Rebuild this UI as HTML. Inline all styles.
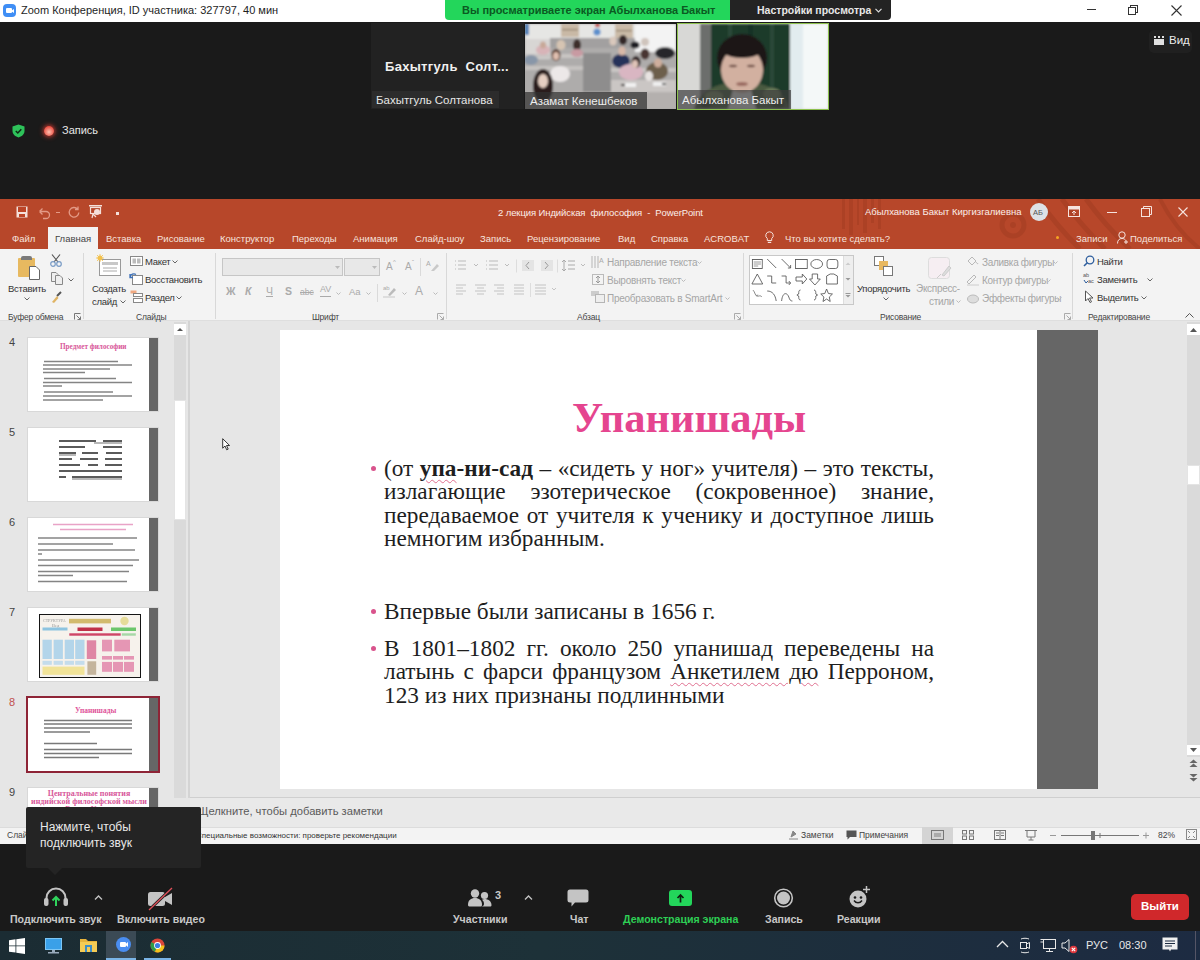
<!DOCTYPE html>
<html><head><meta charset="utf-8">
<style>
*{margin:0;padding:0;box-sizing:border-box}
html,body{width:1200px;height:960px;overflow:hidden;background:#1a1a1a;font-family:"Liberation Sans",sans-serif}
.a{position:absolute}
.t{position:absolute;white-space:nowrap;line-height:1}
svg{position:absolute;overflow:visible}
#ztitle{left:0;top:0;width:1200px;height:22px;background:#fff}
#ppt{left:0;top:199px;width:1200px;height:645px;background:#e6e6e6;overflow:hidden}
#zbar{left:0;top:844px;width:1200px;height:87px;background:#1a1a1a}
#task{left:0;top:931px;width:1200px;height:29px;background:linear-gradient(90deg,#1b2c33,#1d3138 45%,#1d2b42)}
.tab{position:absolute;top:35px;font-size:10px;color:#f6e3de;white-space:nowrap;line-height:1}
.rl{position:absolute;font-size:10px;color:#262626;white-space:nowrap;line-height:1}
.rd{position:absolute;font-size:10px;color:#a6a6a6;white-space:nowrap;line-height:1}
.gl{position:absolute;font-size:9px;color:#444;white-space:nowrap;line-height:1}
.sep{position:absolute;top:58px;width:1px;height:66px;background:#d4d4d4}
.zl{position:absolute;font-size:11px;color:#d0d0d0;white-space:nowrap;line-height:1;top:914px}
</style></head><body>
<!-- ZOOM TITLE BAR -->
<div id="ztitle" class="a">
  <div class="a" style="left:3px;top:4px;width:13px;height:13px;border-radius:4px;background:#3f8ef5"></div>
  <div class="a" style="left:5.5px;top:8px;width:6px;height:5px;border-radius:1px;background:#fff"></div>
  <div class="a" style="left:11px;top:8.5px;width:0;height:0;border-top:2px solid transparent;border-bottom:2px solid transparent;border-right:3px solid #fff"></div>
  <div class="t" style="left:21px;top:5px;font-size:11px;color:#1e1e1e">Zoom Конференция, ID участника: 327797, 40 мин</div>
  <!-- window controls -->
  <div class="a" style="left:1087px;top:9px;width:9px;height:1px;background:#333"></div>
  <div class="a" style="left:1130px;top:5px;width:8px;height:8px;border:1px solid #333"></div>
  <div class="a" style="left:1128px;top:7px;width:8px;height:8px;border:1px solid #333;background:#fff"></div>
  <svg style="left:1171px;top:4.5px" width="11" height="11"><path d="M0.5 0.5L10.5 10.5M10.5 0.5L0.5 10.5" stroke="#333" stroke-width="1.1"/></svg>
</div>
<!-- green banner -->
<div class="a" style="left:445px;top:0;width:290px;height:20px;background:#23d65b;border-radius:0 0 0 4px"></div>
<div class="t" style="left:462px;top:5px;font-size:11px;font-weight:bold;color:#0b5a22">Вы просматриваете экран Абылханова Бакыт</div>
<div class="a" style="left:730px;top:0;width:161px;height:20px;background:#232323;border-radius:0 0 4px 0"></div>
<div class="t" style="left:757px;top:5px;font-size:10.5px;font-weight:bold;color:#e8e8e8">Настройки просмотра</div>
<svg style="left:875px;top:8px" width="7" height="5"><path d="M0.5 0.8L3.5 3.8L6.5 0.8" stroke="#ddd" stroke-width="1.2" fill="none"/></svg>

<!-- VIDEO TILES -->
<div class="a" style="left:371px;top:23px;width:153px;height:86px;background:#222"></div>
<div class="t" style="left:385px;top:60px;font-size:13px;font-weight:bold;color:#f0f0f0;letter-spacing:.3px">Бахытгуль&nbsp; Солт...</div>
<div class="a" style="left:372px;top:91px;width:127px;height:17px;background:#2c2c2c"></div>
<div class="t" style="left:376px;top:95px;font-size:11.5px;color:#e6e6e6">Бахытгуль Солтанова</div>

<div id="tile2" class="a" style="left:525px;top:24px;width:151px;height:85px;overflow:hidden;background:#a9a7a6">
<svg style="left:0;top:0" width="151" height="85">
 <defs><filter id="bl" x="-10%" y="-10%" width="120%" height="120%"><feGaussianBlur stdDeviation="0.9"/></filter></defs>
 <g filter="url(#bl)">
 <rect x="0" y="0" width="151" height="85" fill="#aeacab"/>
 <rect x="0" y="0" width="151" height="15" fill="#e6e6e4"/>
 <rect x="0" y="0" width="4" height="11" fill="#5080b8"/>
 <rect x="36" y="0" width="18" height="13" fill="#c9b9a6"/><rect x="37" y="5" width="16" height="1.2" fill="#8a7a66"/>
 <rect x="90" y="0" width="18" height="15" fill="#cbbba8"/><rect x="91" y="6" width="16" height="1.2" fill="#8a7a66"/>
 <circle cx="72" cy="8" r="3.6" fill="#5b8fcc"/><rect x="70" y="0" width="5" height="3" fill="#c24a4a"/>
 <rect x="110" y="0" width="41" height="28" fill="#f3f3f3"/>
 <rect x="0" y="15" width="25" height="20" fill="#d8d6d4"/>
 <rect x="25" y="14" width="85" height="10" fill="#a2a0a0"/>
 <rect x="0" y="30" width="58" height="4" fill="#c8c5c3"/><rect x="0" y="42" width="58" height="4" fill="#c6c3c1"/>
 <rect x="58" y="29" width="28" height="40" fill="#8e8d8d"/>
 <rect x="86" y="44" width="65" height="4" fill="#c9c6c4"/>
 <rect x="86" y="56" width="65" height="12" fill="#cac6c4"/>
 <rect x="0" y="68" width="151" height="17" fill="#b4b0ae"/>
 <ellipse cx="18" cy="26" rx="7" ry="5" fill="#d8b4b8"/><ellipse cx="18" cy="21" rx="3" ry="3.5" fill="#c8a898"/>
 <ellipse cx="36" cy="21" rx="4.5" ry="5" fill="#d6c4b2"/>
 <ellipse cx="52" cy="21" rx="4" ry="6" fill="#3e2e2c"/><ellipse cx="52" cy="29" rx="6" ry="4" fill="#c89aa2"/>
 <ellipse cx="6" cy="36" rx="7" ry="5" fill="#8896a8"/>
 <ellipse cx="31" cy="31" rx="4.5" ry="6" fill="#5a3a2e"/><ellipse cx="31" cy="32" rx="3" ry="4" fill="#e0c0b0"/>
 <ellipse cx="35" cy="50" rx="10" ry="8" fill="#ece8e8"/>
 <ellipse cx="18" cy="62" rx="10" ry="17" fill="#2a1e1c"/><ellipse cx="18" cy="57" rx="5" ry="7" fill="#e6cfc2"/>
 <ellipse cx="88" cy="17" rx="3.5" ry="4.5" fill="#d9c8bc"/>
 <ellipse cx="98" cy="16" rx="4" ry="5" fill="#332828"/>
 <ellipse cx="110" cy="21" rx="4.5" ry="3.5" fill="#1e1e22"/>
 <ellipse cx="120" cy="18" rx="4" ry="4" fill="#cfc4bc"/>
 <ellipse cx="96" cy="37" rx="9" ry="7" fill="#27305a"/><ellipse cx="97" cy="27" rx="3.5" ry="4.5" fill="#d8b8a8"/>
 <ellipse cx="120" cy="30" rx="4.5" ry="5.5" fill="#4a3630"/>
 <ellipse cx="140" cy="29" rx="10" ry="6" fill="#26262c"/>
 <ellipse cx="106" cy="48" rx="12" ry="8" fill="#d9b6c2"/><ellipse cx="111" cy="38" rx="4.5" ry="6" fill="#2e2020"/><ellipse cx="110" cy="40" rx="3" ry="4" fill="#e0c4b8"/>
 <ellipse cx="132" cy="47" rx="11" ry="9" fill="#6d5e4c"/><ellipse cx="133" cy="39" rx="4" ry="4.5" fill="#cfae9c"/><ellipse cx="124" cy="52" rx="4" ry="5" fill="#e8e4e2"/>
 <rect x="100" y="59" width="11" height="4" fill="#f2f2f2"/><rect x="128" y="58" width="13" height="4" fill="#f0f0f0"/>
 <rect x="96" y="60" width="4" height="2" fill="#333"/><rect x="137" y="59" width="4" height="2" fill="#333"/>
 </g>
 <rect x="0" y="68" width="122" height="17" fill="rgba(50,50,50,.72)"/>
</svg>
<div class="t" style="left:5px;top:72px;font-size:11.5px;color:#eee">Азамат Кенешбеков</div>
</div>

<div id="tile3" class="a" style="left:677px;top:23px;width:152px;height:87px;overflow:hidden;background:#d6d6d4;border:1.5px solid #8cc04e">
<svg style="left:0;top:0" width="150" height="85">
 <defs><filter id="bl2" x="-10%" y="-10%" width="120%" height="120%"><feGaussianBlur stdDeviation="1"/></filter></defs>
 <g filter="url(#bl2)">
 <rect x="0" y="0" width="24" height="85" fill="#d8d8d6"/>
 <rect x="22" y="0" width="12" height="85" fill="#6c6e6c"/>
 <rect x="33" y="0" width="80" height="85" fill="#1f3b2c"/>
 <rect x="50" y="0" width="4" height="85" fill="#2a4a38"/><rect x="70" y="0" width="5" height="85" fill="#173226"/><rect x="92" y="0" width="4" height="85" fill="#2a4a38"/>
 <rect x="112" y="0" width="38" height="85" fill="#e2ecef"/>
 <rect x="125" y="0" width="25" height="85" fill="#f4f8f8"/>
 <ellipse cx="64" cy="34" rx="25" ry="24" fill="#1c1818"/>
 <path d="M16 85C20 68 38 58 64 58C90 58 106 68 112 85Z" fill="#4a5a40"/>
 <path d="M50 85L56 62H72L78 85Z" fill="#ecebea"/>
 <ellipse cx="36" cy="72" rx="9" ry="5" fill="#7a8a62"/><ellipse cx="94" cy="70" rx="9" ry="6" fill="#6c7c5a"/><ellipse cx="28" cy="80" rx="6" ry="4" fill="#2e3a28"/><ellipse cx="100" cy="80" rx="7" ry="4" fill="#2e3a28"/>
 <ellipse cx="64" cy="46" rx="21" ry="23" fill="#d2b0a0"/>
 <ellipse cx="64" cy="24" rx="22" ry="10" fill="#1c1818"/>
 <ellipse cx="55" cy="42" rx="4" ry="1.2" fill="#6a4a40"/><ellipse cx="73" cy="42" rx="4" ry="1.2" fill="#6a4a40"/>
 <ellipse cx="64" cy="60" rx="6" ry="2" fill="#9a6a60"/>
 </g>
 <rect x="0" y="66" width="113" height="19" fill="rgba(60,60,60,.7)"/>
</svg>
<div class="t" style="left:4px;top:71px;font-size:11.5px;color:#eee">Абылханова Бакыт</div>
</div>

<!-- Вид -->
<div class="a" style="left:1149px;top:30px;width:43px;height:23px;border-radius:5px;background:#202020"></div>
<div class="a" style="left:1154px;top:38.5px;width:10px;height:6.5px;background:#e0e0e0"></div>
<div class="a" style="left:1154px;top:35.5px;width:2px;height:2px;background:#e0e0e0"></div>
<div class="a" style="left:1158px;top:35.5px;width:2px;height:2px;background:#e0e0e0"></div>
<div class="a" style="left:1162px;top:35.5px;width:2px;height:2px;background:#e0e0e0"></div>
<div class="t" style="left:1169px;top:35px;font-size:11.5px;color:#ececec">Вид</div>
<!-- shield / record -->
<svg style="left:12px;top:124px" width="13" height="14"><path d="M6.5 0.5L12.5 2.5V7C12.5 10.5 9.5 12.5 6.5 13.5C3.5 12.5 0.5 10.5 0.5 7V2.5Z" fill="#2ec25a"/><path d="M3.8 7L5.8 9L9.3 5.2" stroke="#0d2a14" stroke-width="1.5" fill="none"/></svg>
<div class="a" style="left:41px;top:123px;width:16px;height:16px;border-radius:8px;background:radial-gradient(circle,rgba(230,60,50,.55),rgba(230,60,50,0) 70%)"></div>
<div class="a" style="left:44px;top:126px;width:10px;height:10px;border-radius:5px;background:radial-gradient(circle at 50% 60%,#ffc0b0,#e8473b 75%);box-shadow:0 0 4px 2px rgba(220,60,50,.45)"></div>
<div class="t" style="left:62px;top:125px;font-size:11px;color:#e6e6e6">Запись</div>

<!-- POWERPOINT -->
<!-- POWERPOINT -->
<div class="a" style="left:0;top:199px;width:1200px;height:645px;background:#e6e6e6"></div>
<div class="a" style="left:0;top:199px;width:1200px;height:50px;background:#b7472a"></div>
<!-- decorative pattern -->
<svg style="left:830px;top:199px;overflow:hidden" width="370" height="50">
 <g fill="none" stroke="#9e3a20" opacity=".45">
  <circle cx="183" cy="26" r="11" stroke-width="5"/><circle cx="183" cy="26" r="3" fill="#9e3a20" stroke="none"/>
  <path d="M208 0Q225 25 250 50M232 0Q250 25 275 50M256 0Q274 25 300 50" stroke-width="5"/>
  <path d="M330 0Q345 30 370 50" stroke-width="4"/>
 </g>
 <g fill="#9e3a20" opacity=".4">
  <rect x="12" y="0" width="3" height="30"/><rect x="19" y="0" width="4" height="36"/><rect x="27" y="0" width="2" height="26"/>
  <rect x="33" y="0" width="4" height="34"/><rect x="41" y="0" width="3" height="24"/><rect x="48" y="0" width="3" height="30"/>
 </g>
</svg>
<!-- QAT -->
<svg style="left:16px;top:206px" width="12" height="12"><rect x="0.5" y="0.5" width="11" height="11" fill="#f4e0da"/><rect x="2" y="1" width="8" height="5" fill="#bd4527"/><rect x="3" y="8" width="6" height="3" fill="#bd4527"/></svg>
<svg style="left:38px;top:207px" width="13" height="11"><path d="M1.5 4.5H8A3.5 3.5 0 0 1 8 11.5H5M1.5 4.5L4.5 1.5M1.5 4.5L4.5 7.5" stroke="#e39a86" stroke-width="1.3" fill="none"/></svg>
<div class="a" style="left:56px;top:212px;width:4px;height:1px;background:#e39a86"></div>
<svg style="left:68px;top:206px" width="12" height="12"><path d="M9.5 3A4.8 4.8 0 1 0 10.8 6.5M10 0.5V3.5H7" stroke="#e39a86" stroke-width="1.3" fill="none"/></svg>
<svg style="left:89px;top:205px" width="13" height="14"><rect x="0" y="0" width="13" height="1.5" fill="#f4e0da"/><rect x="1.5" y="2.5" width="10" height="6" fill="none" stroke="#f4e0da" stroke-width="1.2"/><circle cx="8" cy="7" r="3" fill="#f4e0da"/><path d="M4 9L3 13M4 9L7 12" stroke="#f4e0da" stroke-width="1.2"/></svg>
<div class="a" style="left:116px;top:212px;width:3px;height:3px;background:#f4e0da"></div>
<div class="t" style="left:498px;top:208px;font-size:9.5px;color:#fbeee9;letter-spacing:-.1px">2 лекция Индийская&nbsp; философия&nbsp; -&nbsp; PowerPoint</div>
<div class="t" style="left:865px;top:207px;font-size:9.5px;color:#fbeee9">Абылханова Бакыт Киргизгалиевна</div>
<div class="a" style="left:1030px;top:203px;width:18px;height:18px;border-radius:9px;background:#dde1e6"></div>
<div class="t" style="left:1033px;top:209px;font-size:7.5px;color:#555">АБ</div>
<svg style="left:1068px;top:206px" width="12" height="11"><rect x="0.5" y="0.5" width="11" height="10" fill="none" stroke="#f6e3de"/><rect x="0.5" y="0.5" width="11" height="3" fill="#f6e3de"/><path d="M6 9V5M4 7L6 5L8 7" stroke="#f6e3de" fill="none"/></svg>
<div class="a" style="left:1107px;top:212px;width:10px;height:1px;background:#f6e3de"></div>
<svg style="left:1141px;top:206px" width="11" height="11"><rect x="0.5" y="2.5" width="8" height="8" fill="none" stroke="#f6e3de"/><path d="M2.5 2.5V0.5H10.5V8.5H8.5" fill="none" stroke="#f6e3de"/></svg>
<svg style="left:1178px;top:207px" width="10" height="10"><path d="M0.5 0.5L9.5 9.5M9.5 0.5L0.5 9.5" stroke="#f6e3de" stroke-width="1.1"/></svg>
<!-- tabs -->
<div class="a" style="left:48px;top:227px;width:50px;height:23px;background:#f3f3f3"></div>
<div class="t" style="left:12px;top:234px;font-size:9.5px;color:#f6e3de">Файл</div>
<div class="t" style="left:55px;top:234px;font-size:9.5px;color:#444">Главная</div>
<div class="t" style="left:106px;top:234px;font-size:9.5px;color:#f6e3de">Вставка</div>
<div class="t" style="left:157px;top:234px;font-size:9.5px;color:#f6e3de">Рисование</div>
<div class="t" style="left:220px;top:234px;font-size:9.5px;color:#f6e3de">Конструктор</div>
<div class="t" style="left:292px;top:234px;font-size:9.5px;color:#f6e3de">Переходы</div>
<div class="t" style="left:353px;top:234px;font-size:9.5px;color:#f6e3de">Анимация</div>
<div class="t" style="left:415px;top:234px;font-size:9.5px;color:#f6e3de">Слайд-шоу</div>
<div class="t" style="left:480px;top:234px;font-size:9.5px;color:#f6e3de">Запись</div>
<div class="t" style="left:527px;top:234px;font-size:9.5px;color:#f6e3de">Рецензирование</div>
<div class="t" style="left:618px;top:234px;font-size:9.5px;color:#f6e3de">Вид</div>
<div class="t" style="left:651px;top:234px;font-size:9.5px;color:#f6e3de">Справка</div>
<div class="t" style="left:704px;top:234px;font-size:9.5px;color:#f6e3de">ACROBAT</div>
<svg style="left:765px;top:231px" width="9" height="13"><path d="M4.5 0.8A3.7 3.7 0 0 0 2.3 7.5V9.5H6.7V7.5A3.7 3.7 0 0 0 4.5 0.8Z" fill="none" stroke="#f6e3de"/><rect x="2.8" y="10.8" width="3.4" height="1.2" fill="#f6e3de"/></svg>
<div class="t" style="left:785px;top:234px;font-size:9.5px;color:#f6e3de">Что вы хотите сделать?</div>
<div class="a" style="left:1056px;top:236px;width:3px;height:3px;border-radius:2px;background:#f5a623"></div>
<div class="t" style="left:1076px;top:234px;font-size:9.5px;color:#f6e3de">Записи</div>
<svg style="left:1117px;top:231px" width="12" height="13"><circle cx="5" cy="4" r="3.2" fill="none" stroke="#f6e3de"/><path d="M0.5 12.5C0.5 9 2.5 7.5 5 7.5C6.5 7.5 7.5 8 8.5 9M9 9V13M7 11H11" fill="none" stroke="#f6e3de"/></svg>
<div class="t" style="left:1130px;top:234px;font-size:9.5px;color:#f6e3de">Поделиться</div>
<!-- ribbon -->
<div class="a" style="left:0;top:249px;width:1200px;height:72px;background:#f3f3f3;border-bottom:1px solid #dedede"></div>
<!-- clipboard group -->
<div class="a" style="left:18px;top:258px;width:17px;height:19px;background:#e7b960;border-radius:1px"></div>
<div class="a" style="left:21px;top:256px;width:11px;height:4px;background:#7a7a7a;border-radius:2px 2px 0 0"></div>
<svg style="left:29px;top:266px" width="11" height="14"><path d="M0.5 0.5H7L10.5 4V13.5H0.5Z" fill="#fff" stroke="#666"/></svg>
<div class="t" style="left:8px;top:284px;font-size:9.5px;color:#333;letter-spacing:-.3px">Вставить</div>
<svg style="left:24px;top:297px" width="6" height="4"><path d="M0.5 0.5L3 3L5.5 0.5" stroke="#666" fill="none"/></svg>
<svg style="left:50px;top:254px" width="12" height="13"><path d="M2 0.5L8 8M10 0.5L4 8" stroke="#555" stroke-width="1.2"/><circle cx="3" cy="10" r="2.3" fill="none" stroke="#7a9cc6" stroke-width="1.2"/><circle cx="9" cy="10" r="2.3" fill="none" stroke="#7a9cc6" stroke-width="1.2"/></svg>
<svg style="left:51px;top:272px" width="12" height="13"><path d="M0.5 0.5H5L7 2.5V9.5H0.5Z" fill="#eee" stroke="#888"/><path d="M4.5 3.5H9L11.5 6V12.5H4.5Z" fill="#eee" stroke="#888"/></svg>
<svg style="left:68px;top:278px" width="6" height="4"><path d="M0.5 0.5L3 3L5.5 0.5" stroke="#666" fill="none"/></svg>
<svg style="left:51px;top:291px" width="11" height="12"><path d="M6 5L10 1" stroke="#555" stroke-width="2"/><path d="M1 11L6 5L7.5 7L3 12Z" fill="#e0b464"/></svg>
<div class="t" style="left:8px;top:313px;font-size:8.5px;color:#444;letter-spacing:-.2px">Буфер обмена</div>
<svg style="left:74px;top:313px" width="7" height="7"><path d="M0.5 6.5V0.5H6.5M2.5 2.5L6.5 6.5M6.5 3.5V6.5H3.5" stroke="#777" fill="none"/></svg>
<div class="a" style="left:83px;top:253px;width:1px;height:66px;background:#d8d8d8"></div>
<!-- slides group -->
<svg style="left:96px;top:254px" width="26" height="23"><rect x="3.5" y="5.5" width="21" height="16" fill="#fff" stroke="#999"/><rect x="6" y="8" width="16" height="3" fill="#c8c8c8"/><path d="M7 14H21M7 17H21" stroke="#aaa"/><circle cx="4" cy="4" r="2.5" fill="#f2c14e"/><path d="M4 0V8M0 4H8M1 1L7 7M7 1L1 7" stroke="#f2c14e" stroke-width=".8"/></svg>
<div class="t" style="left:92px;top:284px;font-size:9.5px;color:#333;letter-spacing:-.3px">Создать</div>
<div class="t" style="left:92px;top:297px;font-size:9.5px;color:#333;letter-spacing:-.3px">слайд</div>
<svg style="left:120px;top:300px" width="6" height="4"><path d="M0.5 0.5L3 3L5.5 0.5" stroke="#666" fill="none"/></svg>
<svg style="left:130px;top:256px" width="13" height="10"><rect x="0.5" y="0.5" width="12" height="9" fill="#fff" stroke="#888"/><rect x="2.5" y="2.5" width="3.5" height="5" fill="#bbb"/><rect x="7" y="2.5" width="3.5" height="5" fill="#bbb"/></svg>
<div class="t" style="left:145px;top:257px;font-size:9.5px;color:#333;letter-spacing:-.3px">Макет</div>
<svg style="left:172px;top:260px" width="6" height="4"><path d="M0.5 0.5L3 3L5.5 0.5" stroke="#666" fill="none"/></svg>
<svg style="left:129px;top:273px" width="14" height="12"><rect x="3.5" y="2.5" width="10" height="9" fill="#fff" stroke="#888"/><path d="M1 4A4 4 0 0 1 7 1.5M1 1V4.5H4" stroke="#3b6fb6" stroke-width="1.3" fill="none"/></svg>
<div class="t" style="left:145px;top:275px;font-size:9.5px;color:#333;letter-spacing:-.3px">Восстановить</div>
<svg style="left:130px;top:290px" width="13" height="13"><rect x="0.5" y="0.5" width="6" height="3" fill="#f0a880"/><rect x="3.5" y="3.5" width="9" height="3" fill="#fff" stroke="#888"/><rect x="3.5" y="8.5" width="9" height="4" fill="#fff" stroke="#888"/></svg>
<div class="t" style="left:145px;top:293px;font-size:9.5px;color:#333;letter-spacing:-.3px">Раздел</div>
<svg style="left:176px;top:296px" width="6" height="4"><path d="M0.5 0.5L3 3L5.5 0.5" stroke="#666" fill="none"/></svg>
<div class="t" style="left:136px;top:313px;font-size:8.5px;color:#444;letter-spacing:-.2px">Слайды</div>
<div class="a" style="left:215px;top:253px;width:1px;height:66px;background:#d8d8d8"></div>
<!-- font group -->
<div class="a" style="left:222px;top:258px;width:121px;height:18px;background:#e8e8e8;border:1px solid #c6c6c6"></div>
<div class="a" style="left:344px;top:258px;width:36px;height:18px;background:#e8e8e8;border:1px solid #c6c6c6"></div>
<svg style="left:335px;top:266px" width="5" height="3"><path d="M0 0L2.5 3L5 0Z" fill="#bbb"/></svg>
<svg style="left:372px;top:266px" width="5" height="3"><path d="M0 0L2.5 3L5 0Z" fill="#bbb"/></svg>
<div class="t" style="left:386px;top:262px;font-size:10px;color:#aaa">A</div>
<div class="t" style="left:393px;top:259px;font-size:6px;color:#aaa">^</div>
<div class="t" style="left:405px;top:262px;font-size:10px;color:#aaa">A</div>
<div class="t" style="left:412px;top:259px;font-size:6px;color:#aaa">ˇ</div>
<div class="a" style="left:420px;top:258px;width:1px;height:18px;background:#dadada"></div>
<svg style="left:426px;top:259px" width="13" height="13"><text x="0" y="7" font-size="7" fill="#aaa" font-family="Liberation Sans">A</text><path d="M5 12L11 5L13 7L8 12Z" fill="#c9c9c9"/></svg>
<div class="t" style="left:226px;top:286px;font-size:10.5px;font-weight:bold;color:#aaa">Ж</div>
<div class="t" style="left:245px;top:286px;font-size:10.5px;font-weight:bold;font-style:italic;color:#aaa">К</div>
<div class="t" style="left:266px;top:286px;font-size:10.5px;color:#aaa;text-decoration:underline">Ч</div>
<div class="t" style="left:285px;top:286px;font-size:10.5px;font-weight:bold;color:#aaa">S</div>
<div class="t" style="left:300px;top:288px;font-size:8.5px;color:#aaa;text-decoration:line-through">abc</div>
<div class="t" style="left:320px;top:285px;font-size:9px;color:#aaa">AV</div>
<div class="a" style="left:320px;top:296px;width:11px;height:1px;background:#aaa"></div>
<svg style="left:336px;top:292px" width="5" height="3"><path d="M0.5 0.5L2.5 2.5L4.5 0.5" stroke="#bbb" fill="none"/></svg>
<div class="t" style="left:349px;top:287px;font-size:9.5px;color:#aaa">Aa</div>
<svg style="left:366px;top:292px" width="5" height="3"><path d="M0.5 0.5L2.5 2.5L4.5 0.5" stroke="#bbb" fill="none"/></svg>
<div class="a" style="left:377px;top:284px;width:1px;height:18px;background:#dadada"></div>
<svg style="left:383px;top:284px" width="14" height="14"><text x="0" y="6" font-size="6" fill="#aaa" font-family="Liberation Sans">ab</text><path d="M5 11L11 4L13 6L7 12Z" fill="#bbb"/><rect x="0" y="12" width="12" height="2" fill="#ddd"/></svg>
<svg style="left:402px;top:292px" width="5" height="3"><path d="M0.5 0.5L2.5 2.5L4.5 0.5" stroke="#bbb" fill="none"/></svg>
<div class="t" style="left:415px;top:285px;font-size:12px;color:#aaa">A</div>
<svg style="left:433px;top:292px" width="5" height="3"><path d="M0.5 0.5L2.5 2.5L4.5 0.5" stroke="#bbb" fill="none"/></svg>
<div class="t" style="left:312px;top:313px;font-size:8.5px;color:#444;letter-spacing:-.2px">Шрифт</div>
<svg style="left:437px;top:313px" width="7" height="7"><path d="M0.5 6.5V0.5H6.5M2.5 2.5L6.5 6.5M6.5 3.5V6.5H3.5" stroke="#aaa" fill="none"/></svg>
<div class="a" style="left:446px;top:253px;width:1px;height:66px;background:#d8d8d8"></div>
<!-- paragraph group -->
<svg style="left:454px;top:259px" width="130" height="14" stroke="#bbb" fill="none">
 <path d="M1 2H2M1 6H2M1 10H2M4 2H12M4 6H12M4 10H12" stroke-width="1.2"/>
 <path d="M20 5L22 7L24 5"/>
 <path d="M32 2H33M32 6H33M32 10H33M35 2H44M35 6H44M35 10H44" stroke-width="1.2"/>
 <path d="M51 5L53 7L55 5"/>
 <rect x="62" y="0.5" width="1" height="13" fill="#ddd" stroke="none"/>
 <rect x="68" y="1" width="12" height="11" fill="#e4e4e4" stroke="none"/><path d="M75 3L72 6.5L75 10" stroke="#999"/>
 <rect x="87" y="1" width="12" height="11" fill="#e4e4e4" stroke="none"/><path d="M91 3L94 6.5L91 10" stroke="#999"/>
 <rect x="103" y="0.5" width="1" height="13" fill="#ddd" stroke="none"/>
 <path d="M110 1V12M108 3L110 1L112 3M108 10L110 12L112 10M114 2H121M114 6H121M114 10H121" stroke="#aaa"/>
 <path d="M127 5L129 7L131 5"/>
</svg>
<svg style="left:455px;top:283px" width="105" height="14" stroke="#c4c4c4" fill="none">
 <path d="M1 2H11M1 5H8M1 8H11M1 11H8" stroke-width="1.2"/>
 <path d="M20 2H31M22 5H29M20 8H31M22 11H29" stroke-width="1.2"/>
 <path d="M39 2H49M42 5H49M39 8H49M42 11H49" stroke-width="1.2"/>
 <path d="M59 2H69M59 5H69M59 8H69M59 11H69" stroke-width="1.2"/>
 <rect x="75" y="0" width="1" height="14" fill="#ddd" stroke="none"/>
 <path d="M80 2H91M80 5H91M80 8H91M80 11H91" stroke-width="1.2"/>
 <path d="M97 5L99 7L101 5"/>
</svg>
<svg style="left:591px;top:255px" width="14" height="50" stroke="#b5b5b5" fill="none">
 <path d="M1 1V13M4 1V13M7 1V13"/><text x="8" y="8" font-size="7" fill="#aaa" stroke="none" font-family="Liberation Sans">A</text>
 <rect x="1.5" y="19.5" width="11" height="10" stroke="#bbb"/><path d="M7 21V28M5 23L7 21L9 23M5 26L7 28L9 26" stroke="#999"/>
 <rect x="0" y="36" width="8" height="5" fill="#ccc" stroke="none"/><rect x="4.5" y="39.5" width="9" height="8" fill="#eee"/>
</svg>
<div class="rd" style="left:607px;top:258px;letter-spacing:-.25px">Направление текста</div>
<svg style="left:697px;top:261px" width="5" height="3"><path d="M0.5 0.5L2.5 2.5L4.5 0.5" stroke="#bbb" fill="none"/></svg>
<div class="rd" style="left:607px;top:276px;letter-spacing:-.25px">Выровнять текст</div>
<svg style="left:681px;top:279px" width="5" height="3"><path d="M0.5 0.5L2.5 2.5L4.5 0.5" stroke="#bbb" fill="none"/></svg>
<div class="rd" style="left:607px;top:294px;letter-spacing:-.25px">Преобразовать в SmartArt</div>
<svg style="left:725px;top:297px" width="5" height="3"><path d="M0.5 0.5L2.5 2.5L4.5 0.5" stroke="#bbb" fill="none"/></svg>
<div class="t" style="left:577px;top:313px;font-size:8.5px;color:#444;letter-spacing:-.2px">Абзац</div>
<svg style="left:734px;top:313px" width="7" height="7"><path d="M0.5 6.5V0.5H6.5M2.5 2.5L6.5 6.5M6.5 3.5V6.5H3.5" stroke="#aaa" fill="none"/></svg>
<div class="a" style="left:743px;top:253px;width:1px;height:66px;background:#d8d8d8"></div>
<!-- drawing group -->
<div class="a" style="left:749px;top:255px;width:105px;height:50px;background:#fff;border:1px solid #c8c8c8"></div>
<div class="a" style="left:843px;top:256px;width:10px;height:48px;background:#eee;border-left:1px solid #ddd"></div>
<svg style="left:845px;top:262px" width="6" height="40" fill="#999"><path d="M0.5 3L3 0.5L5.5 3Z" fill="#ccc"/><path d="M0.5 16L3 18.5L5.5 16Z"/><rect x="0.5" y="31" width="5" height="1"/><path d="M0.5 33L3 35.5L5.5 33Z"/></svg>
<svg style="left:751px;top:257px" width="92" height="46" stroke="#555" fill="none" stroke-width=".9"><g transform="scale(0.9,1)">
 <rect x="1.5" y="2.5" width="11" height="9"/><path d="M3 5H11M3 7H11M3 9H8" stroke="#888"/>
 <path d="M18 2L28 11"/><path d="M34 2L44 11M41 11H44V8"/>
 <rect x="49.5" y="2.5" width="13" height="9"/><ellipse cx="73" cy="7" rx="6.5" ry="4.5"/><rect x="84.5" y="2.5" width="12" height="9" rx="2.5"/>
 <path d="M1 27L7 17L13 27Z"/><path d="M18 19H23V26H28"/><path d="M34 19H39V26H44M42 24L44 26L42 28"/>
 <path d="M50 20H57V17L62 22L57 27V24H50Z"/><path d="M68 17H74V22H77L71 28L65 22H68Z"/><path d="M84 27V19L88 17H92L96 19V27Z"/>
 <path d="M2 33C5 35 4 40 8 38M5 38C8 41 10 37 12 40" stroke="#777"/><path d="M18 34C24 34 27 38 28 44"/><path d="M34 44C35 35 40 35 42 40C43 43 44 44 46 44"/>
 <path d="M55 33C53 33 53 35 53 37L51 38L53 39C53 41 53 43 55 43"/><path d="M70 33C72 33 72 35 72 37L74 38L72 39C72 41 72 43 70 43"/>
 <path d="M84 32L86 36.5L90.5 37L87 40L88 44.5L84 42L80 44.5L81 40L77.5 37L82 36.5Z"/>
</g></svg>
<svg style="left:874px;top:256px" width="20" height="21"><rect x="0.5" y="0.5" width="9" height="9" fill="#fff" stroke="#777"/><rect x="5" y="5" width="9" height="9" fill="#e8b860"/><rect x="9.5" y="10.5" width="9" height="9" fill="#fff" stroke="#777"/></svg>
<div class="t" style="left:857px;top:284px;font-size:9.5px;color:#333;letter-spacing:-.3px">Упорядочить</div>
<svg style="left:883px;top:297px" width="6" height="4"><path d="M0.5 0.5L3 3L5.5 0.5" stroke="#666" fill="none"/></svg>
<svg style="left:927px;top:256px" width="26" height="26"><rect x="1.5" y="1.5" width="21" height="21" rx="3" fill="#f6eef2" stroke="#ddd"/><path d="M10 22L14 18M15 19L22 10L24 12L17 20Z" stroke="#ccc" fill="#ddd"/></svg>
<div class="rd" style="left:916px;top:284px;letter-spacing:-.3px">Экспресс-</div>
<div class="rd" style="left:929px;top:297px;letter-spacing:-.3px">стили</div>
<svg style="left:956px;top:300px" width="5" height="3"><path d="M0.5 0.5L2.5 2.5L4.5 0.5" stroke="#bbb" fill="none"/></svg>
<svg style="left:966px;top:255px" width="14" height="50" stroke="#b8b8b8" fill="none">
 <path d="M2 6L6 2L10 6L6 10Z"/><path d="M10 7C11 9 12 9 12 8"/>
 <path d="M1 27L8 20L10 22L3 29Z"/><path d="M1 30H13" stroke="#ccc"/>
 <ellipse cx="7" cy="44" rx="5.5" ry="4" fill="#ddd" stroke="#bbb"/>
</svg>
<div class="rd" style="left:982px;top:258px;letter-spacing:-.3px">Заливка фигуры</div>
<svg style="left:1053px;top:261px" width="5" height="3"><path d="M0.5 0.5L2.5 2.5L4.5 0.5" stroke="#bbb" fill="none"/></svg>
<div class="rd" style="left:982px;top:276px;letter-spacing:-.3px">Контур фигуры</div>
<svg style="left:1046px;top:279px" width="5" height="3"><path d="M0.5 0.5L2.5 2.5L4.5 0.5" stroke="#bbb" fill="none"/></svg>
<div class="rd" style="left:982px;top:294px;letter-spacing:-.3px">Эффекты фигуры</div>
<svg style="left:1057px;top:297px" width="5" height="3"><path d="M0.5 0.5L2.5 2.5L4.5 0.5" stroke="#bbb" fill="none"/></svg>
<div class="t" style="left:880px;top:313px;font-size:8.5px;color:#444;letter-spacing:-.2px">Рисование</div>
<svg style="left:1064px;top:313px" width="7" height="7"><path d="M0.5 6.5V0.5H6.5M2.5 2.5L6.5 6.5M6.5 3.5V6.5H3.5" stroke="#aaa" fill="none"/></svg>
<div class="a" style="left:1072px;top:253px;width:1px;height:66px;background:#d8d8d8"></div>
<!-- editing -->
<svg style="left:1083px;top:255px" width="12" height="12"><circle cx="7" cy="5" r="3.8" fill="none" stroke="#2f5f9e" stroke-width="1.3"/><path d="M4.3 7.7L1 11" stroke="#2f5f9e" stroke-width="1.6"/></svg>
<div class="t" style="left:1097px;top:257px;font-size:9.5px;color:#333;letter-spacing:-.3px">Найти</div>
<svg style="left:1083px;top:272px" width="12" height="12"><text x="0" y="5" font-size="5.5" fill="#555" font-family="Liberation Sans">ab</text><text x="5" y="11" font-size="5.5" fill="#555" font-family="Liberation Sans">ac</text><path d="M1 8L3 11L5 9" stroke="#2f5f9e" fill="none"/></svg>
<div class="t" style="left:1097px;top:275px;font-size:9.5px;color:#333;letter-spacing:-.3px">Заменить</div>
<svg style="left:1147px;top:278px" width="6" height="4"><path d="M0.5 0.5L3 3L5.5 0.5" stroke="#666" fill="none"/></svg>
<svg style="left:1084px;top:290px" width="10" height="13"><path d="M1.5 1V11L4 8.5L6 12.5L7.5 11.8L5.5 8H9Z" fill="#fff" stroke="#555"/></svg>
<div class="t" style="left:1097px;top:293px;font-size:9.5px;color:#333;letter-spacing:-.3px">Выделить</div>
<svg style="left:1141px;top:296px" width="6" height="4"><path d="M0.5 0.5L3 3L5.5 0.5" stroke="#666" fill="none"/></svg>
<div class="t" style="left:1088px;top:313px;font-size:8.5px;color:#444;letter-spacing:-.2px">Редактирование</div>
<svg style="left:1185px;top:313px" width="9" height="5"><path d="M0.5 4.5L4.5 0.5L8.5 4.5" stroke="#555" fill="none"/></svg>


<!-- thumbnails pane -->
<div class="a" style="left:188px;top:321px;width:2px;height:477px;background:#d4d4d4"></div>
<div class="a" style="left:174px;top:322px;width:12px;height:476px;background:#dadada"></div>
<div class="a" style="left:174px;top:324px;width:12px;height:11px;background:#fff"></div>
<svg style="left:177px;top:328px" width="6" height="3"><path d="M0 3L3 0L6 3Z" fill="#555"/></svg>
<div class="a" style="left:174px;top:400px;width:12px;height:120px;background:#fff;border:1px solid #e4e4e4"></div>
<div class="t" style="left:9px;top:337px;font-size:11px;color:#444">4</div>
<div class="t" style="left:9px;top:427px;font-size:11px;color:#444">5</div>
<div class="t" style="left:9px;top:517px;font-size:11px;color:#444">6</div>
<div class="t" style="left:9px;top:607px;font-size:11px;color:#444">7</div>
<div class="t" style="left:9px;top:697px;font-size:11px;color:#c0504d">8</div>
<div class="t" style="left:9px;top:787px;font-size:11px;color:#444">9</div>
<!-- thumb 4 -->
<div class="a" style="left:28px;top:338px;width:130px;height:73px;background:#fff;box-shadow:0 0 0 1px #d8d8d8"></div>
<div class="a" style="left:149px;top:338px;width:9px;height:73px;background:#666"></div>
<div class="t" style="left:60px;top:344px;font-size:7.2px;font-weight:bold;color:#d8589a;font-family:'Liberation Serif'">Предмет философии</div>
<svg style="left:40px;top:356px" width="100" height="50">
 <g stroke="#333" stroke-width="1.4" opacity=".6">
  <path d="M4 5.5H78M3 9H92M3 13H70M3 16.5H45"/>
  <path d="M4 22.5H76M3 26.5H92M3 30H22"/>
  <path d="M4 36H73M3 40H92M3 44H63"/>
 </g>
</svg>
<!-- thumb 5 -->
<div class="a" style="left:28px;top:428px;width:130px;height:73px;background:#fff;box-shadow:0 0 0 1px #d8d8d8"></div>
<div class="a" style="left:149px;top:428px;width:9px;height:73px;background:#666"></div>
<svg style="left:58px;top:438px" width="66" height="45">
 <g stroke="#333" stroke-width="2.2" opacity=".8">
  <path d="M1 3H38M45 3H64M1 9H27M45 9H64M1 15H18M24 15H40M48 15H64M1 21H14M22 21H40M47 21H64M1 27H22M30 27H40M47 27H64M1 33H64M1 39H8M14 39H64"/>
 </g>
 <g stroke="#333" stroke-width=".7"><path d="M36 5H64M1 17H18M14 41H64"/></g>
</svg>
<!-- thumb 6 -->
<div class="a" style="left:28px;top:518px;width:130px;height:73px;background:#fff;box-shadow:0 0 0 1px #d8d8d8"></div>
<div class="a" style="left:149px;top:518px;width:9px;height:73px;background:#666"></div>
<svg style="left:33px;top:520px" width="115" height="70">
 <g stroke="#d8589a" stroke-width="1.5" opacity=".55"><path d="M20 4.5H100M27 9.5H93"/></g>
 <g stroke="#333" stroke-width="1.4" opacity=".6">
  <path d="M5 18H104M5 24H80M5 30H102M5 34H9M5 40H106M5 45.5H100M5 51.5H96M5 55.5H40M5 61.5H94"/>
 </g>
</svg>
<!-- thumb 7 -->
<div class="a" style="left:28px;top:608px;width:130px;height:73px;background:#fff;box-shadow:0 0 0 1px #d8d8d8"></div>
<div class="a" style="left:149px;top:608px;width:9px;height:73px;background:#666"></div>
<div class="a" style="left:39px;top:614px;width:102px;height:64px;background:#f6f2ec;border:1.6px solid #151515"></div>
<svg style="left:40px;top:615px" width="100" height="62">
 <g filter="url(#bl3)">
 <text x="3" y="7" font-size="4" fill="#999" font-family="Liberation Serif">СТРУКТУРА</text><text x="12" y="12" font-size="4.5" fill="#999" font-family="Liberation Serif">Вед</text>
 <rect x="29" y="3.8" width="42" height="4.6" fill="#d2bb6e"/>
 <circle cx="84.5" cy="6" r="4.2" fill="#e6dc9a"/>
 <rect x="2.5" y="12.5" width="25" height="3" fill="#8ec4e0"/>
 <rect x="37.5" y="12.5" width="25" height="3.5" fill="#c0304a"/>
 <rect x="71" y="12.5" width="25" height="3.5" fill="#6cc66c"/>
 <rect x="29.3" y="18.3" width="51.4" height="2.4" fill="#cf4466"/><rect x="81.8" y="18.3" width="14" height="2.4" fill="#a6d8a6"/>
 <g fill="#b3d5ea"><rect x="2.5" y="24.7" width="9.3" height="19.3"/><rect x="13.6" y="24.7" width="9.3" height="19.3"/><rect x="24.7" y="24.7" width="9.3" height="19.3"/><rect x="35.2" y="24.7" width="9.3" height="19.3"/></g>
 <g fill="#c4dcec"><rect x="2.5" y="45.8" width="9.3" height="4"/><rect x="13.6" y="45.8" width="9.3" height="4"/><rect x="24.7" y="45.8" width="9.3" height="4"/><rect x="35.2" y="45.8" width="9.3" height="4"/></g>
 <rect x="2.5" y="51.6" width="42" height="8.2" fill="#f1e398"/>
 <rect x="46.8" y="25.3" width="9.4" height="18.7" fill="#df86a4"/>
 <rect x="47.4" y="46.3" width="8.8" height="13.5" fill="#c4b49c"/>
 <g fill="#e596b4"><rect x="62" y="24.7" width="10" height="11.7"/><rect x="74.3" y="24.7" width="15.7" height="11.7"/>
 <rect x="62" y="41" width="10" height="3.6"/><rect x="73" y="41" width="10" height="3.6"/><rect x="84" y="41" width="10" height="3.6"/>
 <rect x="62" y="46.9" width="10" height="9.9"/><rect x="73" y="46.9" width="10" height="9.9"/><rect x="84" y="46.9" width="10" height="9.9"/></g>
 </g>
 <defs><filter id="bl3"><feGaussianBlur stdDeviation="0.35"/></filter></defs>
</svg>
<!-- thumb 8 selected -->
<div class="a" style="left:26px;top:696px;width:134px;height:77px;border:2px solid #8e2436;background:#fff"></div>
<div class="a" style="left:149px;top:698px;width:9px;height:73px;background:#666"></div>
<div class="t" style="left:75px;top:707px;font-size:7.5px;font-weight:bold;color:#e0559a;font-family:'Liberation Serif'">Упанишады</div>
<svg style="left:40px;top:718px" width="100" height="50">
 <g stroke="#333" stroke-width="1.4" opacity=".65">
  <path d="M4 2.5H92M4 6H92M4 10H92M4 14H50"/>
  <path d="M4 25.5H57"/>
  <path d="M4 31.5H92M4 35.5H92M4 39.5H59"/>
 </g>
</svg>
<!-- thumb 9 -->
<div class="a" style="left:28px;top:788px;width:130px;height:40px;background:#fff;box-shadow:0 0 0 1px #d8d8d8"></div>
<div class="a" style="left:149px;top:788px;width:9px;height:40px;background:#666"></div>
<div class="a" style="left:30px;top:790px;width:118px;text-align:center;font-size:8px;line-height:8px;font-weight:bold;color:#d8589a;font-family:'Liberation Serif'">Центральные понятия<br>индийской философской мысли<br>Веда и Ксана</div>

<!-- main slide area -->
<div class="a" style="left:280px;top:330px;width:757px;height:459px;background:#fff"></div>
<div class="a" style="left:1037px;top:330px;width:61px;height:459px;background:#666"></div>
<div class="t" style="left:572px;top:397px;font-size:42.5px;font-weight:bold;color:#e5458f;font-family:'Liberation Serif'">Упанишады</div>
<div class="a" style="left:384px;top:457px;width:550px;font-family:'Liberation Serif';font-size:23.3px;line-height:23.3px;color:#1e1e1e;text-align:justify;text-align-last:left">(от <b><span style="text-decoration:underline wavy #e07090 1px;text-underline-offset:3px">упа</span>-ни-сад</b> – «сидеть у ног» учителя) – это тексты, излагающие эзотерическое (сокровенное) знание, передаваемое от учителя к ученику и доступное лишь немногим избранным.</div>
<div class="a" style="left:384px;top:600px;width:550px;font-family:'Liberation Serif';font-size:23.3px;line-height:23.3px;color:#1e1e1e">Впервые были записаны в 1656 г.</div>
<div class="a" style="left:384px;top:637px;width:550px;font-family:'Liberation Serif';font-size:23.3px;line-height:23.3px;color:#1e1e1e;text-align:justify;text-align-last:left">В 1801–1802 гг. около 250 упанишад переведены на латынь с фарси французом <span style="text-decoration:underline wavy #e07090 1px;text-underline-offset:3px">Анкетилем дю</span> Перроном, 123 из них признаны подлинными</div>
<div class="a" style="left:371px;top:466px;width:5px;height:5px;border-radius:3px;background:#d9538c"></div>
<div class="a" style="left:371px;top:609px;width:5px;height:5px;border-radius:3px;background:#d9538c"></div>
<div class="a" style="left:371px;top:646px;width:5px;height:5px;border-radius:3px;background:#d9538c"></div>
<svg style="left:222px;top:438px" width="10" height="14"><path d="M0.7 0.7V10.2L3 8L4.7 11.8L6.2 11.1L4.5 7.5H7.6Z" fill="#fff" stroke="#222" stroke-width="0.9" stroke-linejoin="round"/></svg>
<!-- right scrollbar -->
<div class="a" style="left:1187px;top:322px;width:13px;height:476px;background:#dadada"></div>
<div class="a" style="left:1187px;top:324px;width:13px;height:11px;background:#fff"></div>
<svg style="left:1190px;top:328px" width="7" height="4"><path d="M0 4L3.5 0L7 4Z" fill="#555"/></svg>
<div class="a" style="left:1187px;top:465px;width:13px;height:20px;background:#fff;border:1px solid #e4e4e4"></div>
<div class="a" style="left:1187px;top:745px;width:13px;height:10px;background:#fff"></div>
<svg style="left:1190px;top:748px" width="7" height="4"><path d="M0 0L3.5 4L7 0Z" fill="#555"/></svg>
<div class="a" style="left:1187px;top:757px;width:13px;height:41px;background:#e6e6e6"></div>
<svg style="left:1189px;top:759px" width="9" height="24" fill="#666"><path d="M0.5 4L4.5 0.5L8.5 4Z"/><path d="M0.5 8L4.5 4.5L8.5 8Z"/><path d="M0.5 15L4.5 18.5L8.5 15Z"/><path d="M0.5 19L4.5 22.5L8.5 19Z"/></svg>
<!-- notes -->
<div class="a" style="left:190px;top:797px;width:1010px;height:1px;background:#cfcfcf"></div>
<div class="a" style="left:190px;top:798px;width:1010px;height:29px;background:#e9e9e9"></div>
<div class="t" style="left:198px;top:806px;font-size:11.2px;color:#5a5a5a">Щелкните, чтобы добавить заметки</div>
<!-- status bar -->
<div class="a" style="left:0;top:827px;width:1200px;height:17px;background:#f3f3f3;border-top:1px solid #dcdcdc"></div>
<div class="t" style="left:7px;top:831px;font-size:8.5px;color:#444">Слайд 8 из 30</div>
<div class="t" style="left:196px;top:832px;font-size:8px;color:#333">Специальные возможности: проверьте рекомендации</div>
<svg style="left:788px;top:829px" width="11" height="11"><path d="M1 10H10M3 8L5 2L8 5Z" fill="#888" stroke="#888"/></svg>
<div class="t" style="left:801px;top:831px;font-size:8.5px;color:#444">Заметки</div>
<svg style="left:846px;top:830px" width="11" height="10"><path d="M0.5 0.5H10.5V7H4L1.5 9.5V7H0.5Z" fill="#555"/></svg>
<div class="t" style="left:859px;top:831px;font-size:8.5px;color:#444">Примечания</div>
<div class="a" style="left:922px;top:827px;width:31px;height:17px;background:#d4d4d4"></div>
<svg style="left:930px;top:829px" width="255" height="12" fill="none" stroke="#777">
 <rect x="1.5" y="1.5" width="12" height="9"/><rect x="4" y="4" width="7" height="4" fill="#aaa" stroke="none"/>
 <rect x="32.5" y="1.5" width="4" height="3.5"/><rect x="39.5" y="1.5" width="4" height="3.5"/><rect x="32.5" y="7" width="4" height="3.5"/><rect x="39.5" y="7" width="4" height="3.5"/>
 <rect x="64.5" y="1.5" width="11" height="9"/><path d="M70 1.5V10.5M66 4H69M66 6.5H69M71 4H74M71 6.5H74"/>
 <path d="M95 1.5H107M97 2V8H105V2M101 8V11M98.5 11H103.5"/>
 <path d="M120 6.5H126" stroke="#999"/>
 <path d="M131 6.5H209" stroke="#777"/><rect x="161" y="2" width="4" height="9" fill="#777" stroke="none"/><path d="M170 4V9"/>
 <path d="M213 6.5H219M216 3.5V9.5" stroke="#999"/>
</svg>
<div class="t" style="left:1158px;top:831px;font-size:8.5px;color:#444">82%</div>
<svg style="left:1186px;top:829px" width="11" height="11" fill="none" stroke="#888"><rect x="0.5" y="0.5" width="10" height="10"/><path d="M2 2L4 4M9 2L7 4M2 9L4 7M9 9L7 7"/></svg>
<!-- ZOOM BOTTOM BAR -->
<div id="zbar" class="a"></div>
<!-- tooltip -->
<div class="a" style="left:26px;top:807px;width:175px;height:61px;background:#242424;border-radius:2px"></div>
<svg style="left:47px;top:867px" width="16" height="9"><path d="M0 0L8 8L16 0Z" fill="#242424"/></svg>
<div class="t" style="left:40px;top:821px;font-size:12px;color:#e8e8e8">Нажмите, чтобы</div>
<div class="t" style="left:40px;top:837px;font-size:12px;color:#e8e8e8">подключить звук</div>
<!-- audio -->
<svg style="left:43px;top:888px" width="26" height="19"><path d="M3.5 12V10A9.5 9.5 0 0 1 22.5 10V12" fill="none" stroke="#c4c4c4" stroke-width="2"/><rect x="1" y="10" width="4.5" height="8" rx="2" fill="#c4c4c4"/><rect x="20.5" y="10" width="4.5" height="8" rx="2" fill="#c4c4c4"/><path d="M13 18V9M9.5 12.5L13 9L16.5 12.5" stroke="#2fd45c" stroke-width="2" fill="none"/></svg>
<svg style="left:94px;top:895px" width="9" height="5"><path d="M1 4.5L4.5 1L8 4.5" stroke="#c4c4c4" stroke-width="1.3" fill="none"/></svg>
<div class="t" style="left:10px;top:914px;font-size:10.6px;font-weight:bold;color:#c8c8c8">Подключить звук</div>
<!-- video -->
<svg style="left:147px;top:887px" width="27" height="24"><rect x="1" y="5" width="17" height="14" rx="2.5" fill="#c4c4c4"/><path d="M18 10L25 6V18L18 14Z" fill="#c4c4c4"/><path d="M2 23L25 1" stroke="#1a1a1a" stroke-width="3"/><path d="M2 23L25 1" stroke="#e0505a" stroke-width="1.3"/></svg>
<div class="t" style="left:117px;top:914px;font-size:10.6px;font-weight:bold;color:#c8c8c8">Включить видео</div>
<!-- participants -->
<svg style="left:468px;top:889px" width="24" height="18" fill="#c4c4c4"><circle cx="7" cy="4.5" r="4.2"/><path d="M0 16C0 11 3 9 7 9C11 9 14 11 14 16C14 17 13 17.5 12 17.5H2C1 17.5 0 17 0 16Z"/><circle cx="16.5" cy="6.5" r="3.6"/><path d="M13 17.5C15 17.5 16 16.5 16 15C16 13 15 11.5 14 10.8C15 10.3 15.8 10 16.5 10C20 10 23.5 12 23.5 16C23.5 17 23 17.5 22 17.5Z"/></svg>
<div class="t" style="left:495px;top:890px;font-size:11px;font-weight:bold;color:#c8c8c8">3</div>
<svg style="left:524px;top:895px" width="9" height="5"><path d="M1 4.5L4.5 1L8 4.5" stroke="#c4c4c4" stroke-width="1.3" fill="none"/></svg>
<div class="t" style="left:453px;top:914px;font-size:10.6px;font-weight:bold;color:#c8c8c8">Участники</div>
<!-- chat -->
<svg style="left:567px;top:889px" width="22" height="18"><path d="M3 0.5H19A2.5 2.5 0 0 1 21.5 3V11A2.5 2.5 0 0 1 19 13.5H8L4.5 17.5V13.5H3A2.5 2.5 0 0 1 0.5 11V3A2.5 2.5 0 0 1 3 0.5Z" fill="#c4c4c4"/></svg>
<div class="t" style="left:570px;top:914px;font-size:10.6px;font-weight:bold;color:#c8c8c8">Чат</div>
<!-- share -->
<div class="a" style="left:669px;top:890px;width:23px;height:16px;border-radius:3px;background:#23d65b"></div>
<svg style="left:675px;top:893px" width="11" height="10"><path d="M5.5 9.5V2M2.5 5L5.5 2L8.5 5" stroke="#0f1f12" stroke-width="1.7" fill="none"/></svg>
<div class="t" style="left:623px;top:914px;font-size:10.6px;font-weight:bold;color:#2ecf55">Демонстрация экрана</div>
<!-- record -->
<svg style="left:773px;top:888px" width="21" height="20"><circle cx="10.5" cy="10" r="8.8" fill="none" stroke="#c4c4c4" stroke-width="1.6"/><circle cx="10.5" cy="10" r="6.5" fill="#c4c4c4"/></svg>
<div class="t" style="left:765px;top:914px;font-size:10.6px;font-weight:bold;color:#c8c8c8">Запись</div>
<!-- reactions -->
<svg style="left:848px;top:885px" width="23" height="23"><circle cx="10" cy="14" r="8.5" fill="#c4c4c4"/><circle cx="7" cy="12.5" r="1.3" fill="#1a1a1a"/><circle cx="13" cy="12.5" r="1.3" fill="#1a1a1a"/><path d="M6 15.5C8 18.5 12 18.5 14 15.5" stroke="#1a1a1a" stroke-width="1.4" fill="none"/><path d="M18.5 1V8M15 4.5H22" stroke="#c4c4c4" stroke-width="1.5"/></svg>
<div class="t" style="left:837px;top:914px;font-size:10.6px;font-weight:bold;color:#c8c8c8">Реакции</div>
<!-- exit -->
<div class="a" style="left:1131px;top:894px;width:58px;height:26px;border-radius:5px;background:#d0282b"></div>
<div class="t" style="left:1141px;top:901px;font-size:11.5px;font-weight:bold;color:#fff">Выйти</div>
<!-- TASKBAR -->
<div id="task" class="a"></div>
<svg style="left:9px;top:938px" width="16" height="16" fill="#fff"><path d="M0 2.2L6.5 1.3V7.5H0Z"/><path d="M7.3 1.2L16 0V7.5H7.3Z"/><path d="M0 8.3H6.5V14.6L0 13.8Z"/><path d="M7.3 8.3H16V16L7.3 14.8Z"/></svg>
<svg style="left:45px;top:938px" width="17" height="16"><rect x="0.5" y="0.5" width="16" height="11" fill="#3aa0e8"/><rect x="0.5" y="0.5" width="16" height="11" fill="none" stroke="#7cc6f5"/><rect x="7" y="12" width="3" height="2" fill="#9ab"/><rect x="3" y="14" width="11" height="1.5" fill="#9ab"/></svg>
<svg style="left:80px;top:937px" width="17" height="16"><path d="M0 2H6L8 4H17V15H0Z" fill="#e8b43c"/><rect x="0" y="5" width="17" height="10" fill="#f5cc55"/><rect x="5" y="8" width="7" height="7" fill="#3d8ec8"/><rect x="7" y="10" width="3" height="5" fill="#f5cc55"/></svg>
<div class="a" style="left:106px;top:931px;width:30px;height:29px;background:#3b4a55"></div>
<div class="a" style="left:106px;top:958px;width:30px;height:2px;background:#7ab4e6"></div>
<div class="a" style="left:116px;top:937px;width:15px;height:15px;border-radius:8px;background:#4a8df0"></div>
<div class="a" style="left:119.5px;top:942px;width:6px;height:5px;border-radius:1px;background:#fff"></div>
<svg style="left:125px;top:942px" width="3" height="5"><path d="M0 2.5L3 0V5Z" fill="#fff"/></svg>
<div class="a" style="left:144px;top:958px;width:27px;height:2px;background:#7ab4e6"></div>
<svg style="left:150px;top:938px" width="15" height="15"><circle cx="7.5" cy="7.5" r="7" fill="#d9453a"/><path d="M7.5 7.5L1.4 4A7 7 0 0 0 5 14Z" fill="#2e9d4a"/><path d="M7.5 7.5L5 14A7 7 0 0 0 14.5 7.5Z" fill="#f2c21b"/><circle cx="7.5" cy="7.5" r="3.4" fill="#fff"/><circle cx="7.5" cy="7.5" r="2.6" fill="#3b7fe0"/></svg>
<!-- tray -->
<svg style="left:996px;top:940px" width="13" height="8"><path d="M1 7L6.5 1.5L12 7" stroke="#e8e8e8" stroke-width="1.3" fill="none"/></svg>
<svg style="left:1019px;top:937px" width="12" height="17" fill="none" stroke="#e8e8e8"><path d="M2 2C4 1 8 1 10 2M2 15C4 16 8 16 10 15"/><rect x="1.5" y="5.5" width="6" height="6"/><path d="M7.5 7L10.5 5.5V11.5L7.5 10"/></svg>
<svg style="left:1040px;top:938px" width="16" height="15" fill="none" stroke="#e8e8e8"><rect x="3.5" y="1.5" width="12" height="9"/><path d="M9.5 10.5V13.5M6 13.5H13M0.5 1.5H3M0.5 4H3"/></svg>
<svg style="left:1061px;top:938px" width="17" height="16"><path d="M1 5H4L8 1.5V13.5L4 10H1Z" fill="none" stroke="#e8e8e8"/><circle cx="12.5" cy="11.5" r="3.8" fill="#e0383e"/><path d="M10.8 9.8L14.2 13.2M14.2 9.8L10.8 13.2" stroke="#fff" stroke-width="1.1"/></svg>
<div class="t" style="left:1086px;top:940px;font-size:11px;color:#e8e8e8">РУС</div>
<div class="t" style="left:1119px;top:940px;font-size:11px;color:#e8e8e8">08:30</div>
<svg style="left:1162px;top:937px" width="16" height="17"><path d="M0.5 0.5H15.5V12.5H9L8 14.5L7 12.5H0.5Z" fill="#f0f0f0"/><path d="M3 4H13M3 6.5H13M3 9H10" stroke="#1c2a40" stroke-width="1"/></svg>
<div class="a" style="left:1195px;top:931px;width:1px;height:29px;background:#556"></div>
</body></html>
